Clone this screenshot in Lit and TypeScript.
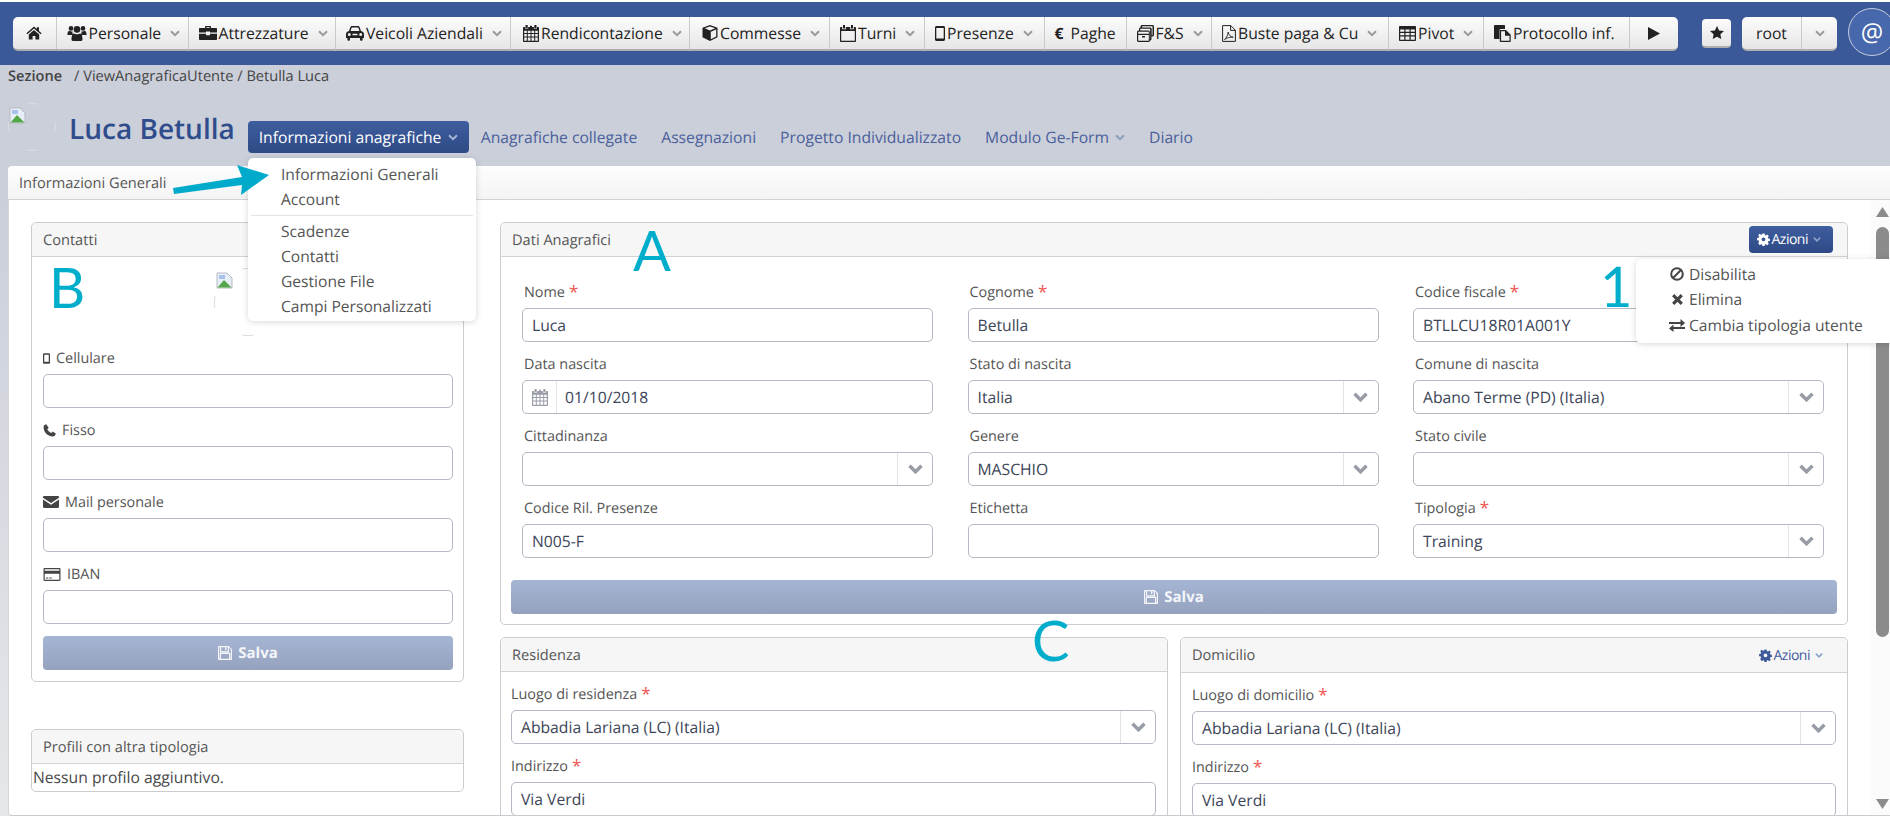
import { LitElement, html, css } from "lit";
import { customElement } from "lit/decorators.js";

const I: Record<string, () => any> = {
  home: () => html`<svg class="ic" width="16" height="14" viewBox="0 0 16 14" fill="currentColor"><path d="M8 0.6 0.4 7.2l1 1.1L8 2.6l6.6 5.7 1-1.1L13 4.9V1.2h-2.2v1.8z" /><path d="M8 4 2.8 8.4V13.6H6.6V10h2.8v3.6h3.8V8.4z" /></svg>`,
  users: () => html`<svg class="ic" width="20" height="16" viewBox="0 0 20 16" fill="currentColor"><circle cx="4" cy="3.4" r="2.3" /><circle cx="16" cy="3.4" r="2.3" /><circle cx="10" cy="4.4" r="3.3" /><path d="M0.4 10c0-3 1-4.2 2.2-4.2.8.8 2.2.9 3 .4-.3 1.200-.1 2.700.7 3.800H1.200C.6 10 .4 10.300.4 10zM19.600 10c0-3-1-4.200-2.200-4.200-.8.8-2.200.9-3 .4.300 1.200.1 2.700-.7 3.800h4.700c.6 0 1.200.3 1.200 0z" /><path d="M5.800 15.900c-.8 0-1.300-.5-1.300-1.300 0-3.600.8-6 2.400-6 1 1 5.200 1 6.200 0 1.600 0 2.400 2.400 2.400 6 0 .8-.5 1.300-1.300 1.300z" /></svg>`,
  brief: () => html`<svg class="ic" width="18" height="14" viewBox="0 0 18 14" fill="currentColor"><path d="M6 2V1c0-.6.4-1 1-1h4c.6 0 1 .4 1 1v1h5c.6 0 1 .4 1 1v3.600H11V5.500H7v1.100H0V3c0-.6.4-1 1-1zm1.300 0h3.400V1.200H7.300z" /><path d="M0 7.800h7V9.200h4V7.800h7V13c0 .6-.4 1-1 1H1c-.6 0-1-.4-1-1z" /></svg>`,
  car: () => html`<svg class="ic" width="18" height="15" viewBox="0 0 18 15" fill="currentColor"><path fill-rule="evenodd" d="M3 5 4.200 1.500C4.500.6 5.200 0 6.200 0h5.600c1 0 1.700.6 2 1.500L15 5c1.700.3 3 1.500 3 3.200V12h-1.400v1.500c0 .8-.5 1.300-1.300 1.300s-1.300-.5-1.300-1.300V12H4v1.500c0 .8-.5 1.300-1.300 1.300s-1.300-.5-1.300-1.300V12H0V8.200C0 6.500 1.300 5.300 3 5zm1.600-.1h8.800l-.9-2.800c-.1-.4-.4-.6-.8-.6H6.300c-.4 0-.7.2-.8.6zM3.300 7a1.500 1.500 0 1 0 0 3 1.500 1.500 0 0 0 0-3zm11.400 0a1.500 1.500 0 1 0 0 3 1.500 1.500 0 0 0 0-3zM6.500 7.800v1.400h5V7.800z" /></svg>`,
  cal: () => html`<svg class="ic" width="16" height="17" viewBox="0 0 16 17" fill="currentColor"><path d="M2.500 0h2.200v3H2.500zM11.300 0h2.200v3h-2.200zM7 0.800h2v2H7z" /><path fill-rule="evenodd" d="M1 2h1v1.500h3.200V2h5.600v1.500H14V2h1c.6 0 1 .4 1 1v13c0 .6-.4 1-1 1H1c-.6 0-1-.4-1-1V3c0-.6.4-1 1-1zm.2 3.800v2.300h2.600V5.800zm3.600 0v2.300h2.700V5.800zm3.700 0v2.300h2.700V5.800zm3.700 0v2.300h2.600V5.800zM1.200 9.100v2.300h2.600V9.100zm3.600 0v2.300h2.700V9.100zm3.700 0v2.300h2.700V9.100zm3.700 0v2.300h2.600V9.100zM1.200 12.400v3.300h2.600v-3.300zm3.600 0v3.300h2.700v-3.300zm3.700 0v3.300h2.700v-3.300zm3.700 0v3.300h2.600v-3.300z" /></svg>`,
  cube: () => html`<svg class="ic" width="16" height="16" viewBox="0 0 16 16" fill="currentColor"><path fill-rule="evenodd" d="M8 0l7.500 2.800v9.400L8 16 .5 12.200V2.800zM2.800 3.300 8 5.400l5.200-2.100L8 1.400zM8.800 6.700v7.500l5.400-2.800V4.500z" /></svg>`,
  calo: () => html`<svg class="ic" width="16" height="17" viewBox="0 0 16 17" fill="currentColor"><path d="M3 0h2v3.500H3zM11 0h2v3.500h-2z" /><path fill-rule="evenodd" d="M1 2h1.200v2.200h3.600V2h4.400v2.200h3.600V2H15c.6 0 1 .4 1 1v13c0 .6-.4 1-1 1H1c-.6 0-1-.4-1-1V3c0-.6.4-1 1-1zm.2 4v9.800h13.600V6z" /></svg>`,
  mobile: () => html`<svg class="ic" width="10" height="15" viewBox="0 0 10 15" fill="currentColor"><path fill-rule="evenodd" d="M1.500 0h7C9.300 0 10 .7 10 1.500v12c0 .8-.7 1.500-1.500 1.500h-7C.7 15 0 14.300 0 13.500v-12C0 .7.700 0 1.500 0zM1.300 2v10.500h7.400V2z" /></svg>`,
  mobileS: () => html`<svg class="ic" width="7" height="11" viewBox="0 0 10 15" fill="currentColor"><path fill-rule="evenodd" d="M1.500 0h7C9.300 0 10 .7 10 1.500v12c0 .8-.7 1.500-1.500 1.500h-7C.7 15 0 14.300 0 13.500v-12C0 .7.700 0 1.500 0zM1.800 2.200v10h6.400v-10z" /></svg>`,
  box: () => html`<svg class="ic" width="17" height="17" viewBox="0 0 17 17" fill="currentColor"><path fill-rule="evenodd" d="M5 0h10.500c.8 0 1.500.7 1.500 1.500V10c0 .8-.7 1.500-1.500 1.500h-1V14c0 .8-.7 1.500-1.500 1.500v0c0 .8-.7 1.500-1.500 1.500H1.500C.7 17 0 16.300 0 15.500V7c0-.8.7-1.500 1.500-1.500H2V4c0-.8.7-1.500 1.500-1.500V1.500C3.500.7 4.200 0 5 0zm.2 1.200v1.300h8c.8 0 1.500.7 1.500 1.500v6.200h.8V1.200zM3.300 3.800v1.700h8c.8 0 1.500.7 1.500 1.500v7h.3V3.800zM1.200 6.800v2h10.600v-2zm0 3.200v5.800h10.600V10zm3.800 1h3v1.500H5z" /></svg>`,
  pdf: () => html`<svg class="ic" width="14" height="17" viewBox="0 0 14 17" fill="none" stroke="currentColor"><path d="M.6.6h8.200l4.600 4.600v11.200H.6z" /><path d="M8.600.6v4.800h4.800" /><path stroke-width=".9" d="M2.500 14.500c1.500-.8 3.200-4 3.700-7.500.3 3 2.500 5 5 5.200-3-.3-6.300.5-8.700 2.300z" /></svg>`,
  table: () => html`<svg class="ic" width="17" height="15" viewBox="0 0 17 15" fill="currentColor"><path fill-rule="evenodd" d="M.8 0h15.400c.4 0 .8.400.8.800v13.400c0 .4-.4.800-.8.800H.8c-.4 0-.8-.4-.8-.8V.8C0 .4.400 0 .8 0zm.4 3.500v2.300h4.100V3.500zm5.300 0v2.300h4V3.500zm5.200 0v2.300h4.100V3.500zM1.200 7v2.300h4.100V7zm5.300 0v2.300h4V7zm5.200 0v2.300h4.100V7zM1.200 10.500v3.200h4.100v-3.200zm5.300 0v3.200h4v-3.200zm5.200 0v3.200h4.100v-3.200z" /></svg>`,
  paste: () => html`<svg class="ic" width="17" height="17" viewBox="0 0 17 17" fill="currentColor"><path d="M1 0h9c.6 0 1 .4 1 1v3H7C6 4 5.500 4.600 5.500 5.500V14H1c-.6 0-1-.4-1-1V1c0-.6.4-1 1-1z" /><path fill-rule="evenodd" d="M6.800 5H12l4.700 4.700V16c0 .6-.4 1-1 1H6.800c-.6 0-1-.4-1-1V6c0-.6.4-1 1-1zm.3 1.200v9.600h8.400v-5H11V6.200z" /></svg>`,
  play: () => html`<svg class="ic" width="12" height="13" viewBox="0 0 12 13" fill="currentColor"><path d="M0 0 12 6.500 0 13z" /></svg>`,
  star: () => html`<svg class="ic" width="14" height="13" viewBox="0 0 14 13" fill="currentColor"><path d="M7 0l2.100 4.400 4.900.6-3.600 3.300.9 4.700L7 10.700 2.700 13l.9-4.700L0 5l4.900-.6z" /></svg>`,
  gear: () => html`<svg class="ic" width="13" height="13" viewBox="-.5 -.5 15 15" fill="currentColor"><path fill-rule="evenodd" d="M5.800 0h2.400l.4 1.900 1.200.5 1.600-1.100 1.700 1.700-1.100 1.600.5 1.200 1.900.4v2.400l-1.900.4-.5 1.200 1.100 1.600-1.700 1.700-1.600-1.100-1.200.5-.4 1.900H5.800l-.4-1.900-1.200-.5-1.600 1.100L.9 11l1.100-1.600-.5-1.200L-.4 7.800V5.400l1.900-.4.5-1.200L.9 2.200l1.700-1.700 1.600 1.100 1.200-.5zM7 4.600a2.200 2.200 0 1 0 0 4.400 2.200 2.200 0 0 0 0-4.400z" /></svg>`,
  ban: () => html`<svg class="ic" width="14" height="14" viewBox="0 0 14 14" fill="none" stroke="currentColor" stroke-width="2"><circle cx="7" cy="7" r="5.800" /><path d="M3 11 11 3" /></svg>`,
  times: () => html`<svg class="ic" width="11" height="11" viewBox="0 0 11 11" fill="none" stroke="currentColor" stroke-width="3.200"><path d="M1.200 1.200l8.600 8.600M9.800 1.200l-8.600 8.600" /></svg>`,
  swap: () => html`<svg class="ic" width="16" height="13" viewBox="0 0 16 13" fill="currentColor"><path d="M0 3h11.500V0L16 4l-4.500 4V5H0zM16 8H4.500V5.600L0 9.500l4.500 3.500v-3H16z" /></svg>`,
  phone: () => html`<svg class="ic" width="13" height="13" viewBox="0 0 13 13" fill="currentColor"><path d="M3.200.2 1 1.300C-.2 4.500 1.500 8 3.300 9.800c1.900 1.800 5.200 3.500 8.400 2.300l1.200-2.300-3-2.300-1.600 1.400C6.500 8.400 4.700 6.600 4.300 5.300l1.400-1.600z" /></svg>`,
  mail: () => html`<svg class="ic" width="16" height="12" viewBox="0 0 16 12" fill="currentColor"><path d="M1.200 0h13.600c.7 0 1.200.5 1.200 1.200v.6L8 7 0 1.800v-.6C0 .5.500 0 1.200 0z" /><path d="M0 3.500 8 8.700l8-5.200v7.300c0 .7-.5 1.200-1.200 1.200H1.200C.5 12 0 11.500 0 10.800z" /></svg>`,
  card: () => html`<svg class="ic" width="18" height="13" viewBox="0 0 17 13" fill="currentColor"><path fill-rule="evenodd" d="M1.200 0h14.600c.7 0 1.200.5 1.200 1.200v10.600c0 .7-.5 1.200-1.200 1.200H1.200C.5 13 0 12.500 0 11.800V1.200C0 .5.500 0 1.200 0zM1.200 1.300v1.500h14.600V1.300zm0 4.400v6h14.600v-6zm1.200 3.900h2.400v1H2.400zm3.400 0h2.400v1H5.800z" /></svg>`,
  save: () => html`<svg class="ic" width="14" height="14" viewBox="0 0 14 14" fill="currentColor"><path fill-rule="evenodd" d="M1 0h9.800L14 3.200V13c0 .6-.4 1-1 1H1c-.6 0-1-.4-1-1V1c0-.6.4-1 1-1zm2.200 1.200v4h6.600v-4H8.400v3H7v-3zM3 8v4.800h8V8zM1.200 1.200v11.600h.6V7.300c0-.3.2-.5.5-.5h9.400c.3 0 .5.2.5.5v5.500h.6V3.700L11 1.300v4.400c0 .4-.2.7-.6.7H2.600c-.3 0-.6-.3-.6-.7V1.200z" /></svg>`,
};

const chev = () => html`<svg class="chev" width="10" height="7" viewBox="0 0 10 7" fill="none" stroke="currentColor" stroke-width="2"><path d="M1 1.200 5 5.200l4-4" /></svg>`;
const chevBig = () => html`<svg class="ic" width="15" height="10" viewBox="0 0 15 10" fill="none" stroke="currentColor" stroke-width="3.400"><path d="M1.500 1.800 7.500 7.800l6-6" /></svg>`;

// browser's broken-image glyph
const broken = () => html`<svg class="broken" width="17" height="17" viewBox="0 0 17 17"><path d="M1 1h10l5 5v10H1z" fill="#e8eef8" stroke="#b5b9c2" /><path d="M1.500 15.500 8 8l7.500 7.500z" fill="#55a84a" /><path d="M3 3h6v4H3z" fill="#a9c3ee" /></svg>`;

// only short arcs of the avatar's circle show up around the broken picture
const ring = (d: number) => {
  const r = d / 2 - 0.5;
  const c = 2 * Math.PI * r;
  return html`<svg class="ring" width=${d} height=${d} fill="none"><circle cx=${d / 2} cy=${d / 2} r=${r} stroke="#d9dbe0" stroke-dasharray="${12} ${c / 4 - 12}" stroke-dashoffset="6" /></svg>`;
};

const TOOLBAR = [
  { icon: "home" },
  { icon: "users", label: "Personale", more: true },
  { icon: "brief", label: "Attrezzature", more: true },
  { icon: "car", label: "Veicoli Aziendali", more: true },
  { icon: "cal", label: "Rendicontazione", more: true, wide: true },
  { icon: "cube", label: "Commesse", more: true, wide: true },
  { icon: "calo", label: "Turni", more: true },
  { icon: "mobile", label: "Presenze", more: true },
  { euro: true, label: "Paghe" },
  { icon: "box", label: "F&S", more: true },
  { icon: "pdf", label: "Buste paga & Cu", more: true },
  { icon: "table", label: "Pivot", more: true },
  { icon: "paste", label: "Protocollo inf." },
  { icon: "play" },
];

type Field = { label: string; req?: boolean; value?: string; kind?: "input" | "select" | "date" };

const DATI: Field[] = [
  { label: "Nome", req: true, value: "Luca" },
  { label: "Cognome", req: true, value: "Betulla" },
  { label: "Codice fiscale", req: true, value: "BTLLCU18R01A001Y" },
  { label: "Data nascita", value: "01/10/2018", kind: "date" },
  { label: "Stato di nascita", value: "Italia", kind: "select" },
  { label: "Comune di nascita", value: "Abano Terme (PD) (Italia)", kind: "select" },
  { label: "Cittadinanza", kind: "select" },
  { label: "Genere", value: "MASCHIO", kind: "select" },
  { label: "Stato civile", kind: "select" },
  { label: "Codice Ril. Presenze", value: "N005-F" },
  { label: "Etichetta" },
  { label: "Tipologia", req: true, value: "Training", kind: "select" },
];

@customElement("app-root")
export class AppRoot extends LitElement {
  static styles = css`
    :host {
      display: block;
      position: relative;
      width: 1890px;
      height: 816px;
      overflow: hidden;
      background: linear-gradient(#cbcfd9 200px, #e6e7ea 816px);
      font-family: "Open Sans", sans-serif;
      font-size: 14.4px;
      color: #555;
      text-rendering: geometricPrecision;
    }
    svg {
      display: block;
      flex: none;
    }

    /* top bar */
    .nav {
      display: flex;
      align-items: flex-start;
      height: 48px;
      padding: 15px 0 0 13px;
      border-top: 2px solid #fff;
      background: #3b5998;
    }
    .nav > * {
      flex: none;
    }
    .toolbar {
      display: grid;
      grid-template-columns: 43.5px 132px 147.5px 175px 179px 140px 95px 119.5px 82px 85.5px 177px 95px 145.5px 48.5px;
      height: 34px;
    }
    .tool,
    .btn {
      display: flex;
      align-items: center;
      box-sizing: border-box;
      height: 34px;
      background: linear-gradient(#fcfcfc, #e6e6e6);
      border-bottom: 2px solid #aeaeae;
      color: #222;
      font-size: 15.7px;
    }
    .tool {
      gap: 2px;
      padding: 0 0 0 10px;
      border-right: 1px solid #c9c9c9;
      white-space: nowrap;
    }
    .tool.wide {
      padding-left: 12px;
    }
    .tool:first-child {
      justify-content: center;
      padding: 0;
      border-radius: 5px 0 0 5px;
    }
    .tool:last-child {
      justify-content: center;
      padding: 0;
      border-right: 0;
      border-radius: 0 5px 5px 0;
    }
    .tool .chev,
    .btn .chev {
      margin-left: 7px;
      color: #999;
    }
    .euro {
      font-weight: 700;
      width: 14px;
    }
    .star {
      justify-content: center;
      width: 29px;
      height: 29px;
      margin: 2px 0 0 24px;
      border-radius: 4px;
    }
    .user {
      display: flex;
      margin-left: 11px;
    }
    .user .name {
      justify-content: center;
      width: 60px;
      border-right: 1px solid #c9c9c9;
      border-radius: 5px 0 0 5px;
    }
    .user .caret {
      justify-content: center;
      width: 35px;
      border-radius: 0 5px 5px 0;
    }
    .user .caret .chev {
      margin: 0;
    }
    .at {
      box-sizing: border-box;
      display: flex;
      align-items: center;
      justify-content: center;
      width: 48px;
      height: 48px;
      margin: -9px 0 0 11px;
      border-radius: 50%;
      border: 1px solid #c4cde0;
      background: #4768ad;
      color: #fff;
      font-size: 25px;
    }

    .crumb {
      display: flex;
      align-items: center;
      gap: 12px;
      height: 22px;
      padding-left: 8px;
      color: #444;
      font-size: 14.6px;
    }
    .crumb b {
      font-weight: 600;
    }

    /* page header */
    .head {
      display: flex;
      align-items: flex-start;
      height: 79px;
      padding-left: 8px;
    }
    .avatar {
      position: relative;
      flex: none;
      width: 48px;
      height: 50px;
      margin-top: 16px;
    }
    .avatar .broken {
      position: absolute;
      left: 1px;
      top: 4px;
    }
    h1 {
      margin: 24px 13px 0 13px;
      font-size: 28px;
      line-height: 36px;
      font-weight: 600;
      color: #2f4c8c;
      white-space: nowrap;
    }
    .pill {
      display: flex;
      align-items: center;
      gap: 7px;
      box-sizing: border-box;
      width: 221px;
      height: 32px;
      margin-top: 34px;
      padding-left: 11px;
      border-radius: 4px;
      background: linear-gradient(#3f5e9f, #2e4a86);
      color: #fff;
      font-size: 15.7px;
    }
    .pill .chev {
      color: #a5b4d3;
    }
    .links {
      display: flex;
      align-items: center;
      gap: 24px;
      height: 32px;
      margin: 34px 0 0 12px;
      color: #4a5f9c;
      font-size: 15.7px;
    }
    .links span {
      display: flex;
      align-items: center;
      gap: 6px;
    }
    .links .chev {
      color: #8d9cc0;
    }

    /* tab strip and panel */
    .tabs {
      box-sizing: border-box;
      height: 34px;
      margin-left: 8px;
      padding: 7px 0 0 11px;
      background: linear-gradient(#fdfdfd, #f4f4f4);
      border-bottom: 1px solid #d2d2d2;
      border-radius: 4px 0 0 0;
      font-size: 14.6px;
    }
    .panel {
      display: flex;
      height: 616px;
      box-sizing: border-box;
      margin-left: 8px;
      border-left: 1px solid #d4d6da;
      border-bottom: 1px solid #c9cbd0;
      border-radius: 0 0 0 4px;
      background: #fff;
    }
    .main {
      flex: 1;
      min-width: 0;
      overflow: hidden;
      display: grid;
      grid-template-columns: 433px 1348px;
      gap: 36px;
      align-items: start;
      padding: 22px 0 0 22px;
    }
    .col {
      display: flex;
      flex-direction: column;
    }
    .scroll {
      flex: none;
      box-sizing: border-box;
      width: 20px;
      display: flex;
      flex-direction: column;
      padding: 7px 1px 6px 6px;
      background: #fbfbfb;
      color: #8b8b8b;
    }
    .thumb {
      height: 410px;
      margin: 10px 0 auto;
      border-radius: 7px;
      background: #8b8b8b;
    }

    .card {
      box-sizing: border-box;
      border: 1px solid #cbccd1;
      border-radius: 5px;
      background: #fff;
    }
    .card-h {
      display: flex;
      align-items: center;
      justify-content: space-between;
      box-sizing: border-box;
      height: 34px;
      padding: 0 11px;
      background: #f6f6f6;
      border-bottom: 1px solid #d3d3d3;
      border-radius: 5px 5px 0 0;
      color: #555;
      font-size: 14.6px;
    }
    .card-h.tall {
      height: 35px;
    }
    .contact-body {
      padding: 0 10px 11px 11px;
    }
    .photo {
      position: relative;
      height: 91px;
    }
    .photo .ring {
      position: absolute;
      left: 171px;
      top: 11px;
    }
    .photo .broken {
      position: absolute;
      left: 173px;
      top: 15px;
    }
    .field {
      padding-bottom: 12px;
    }
    .lab {
      display: flex;
      align-items: center;
      gap: 6px;
      height: 20px;
      margin-bottom: 6px;
      white-space: nowrap;
    }
    .lab .req {
      margin-left: -2px;
      color: #f0534f;
      font-size: 17px;
      line-height: 20px;
    }
    .lab svg {
      color: #444;
    }
    .ctl {
      display: flex;
      align-items: center;
      box-sizing: border-box;
      height: 34px;
      border: 1px solid #b5b7c3;
      border-radius: 5px;
      background: #fff;
      color: #3c4558;
      font-size: 15.7px;
    }
    .ctl .val {
      flex: 1;
      min-width: 0;
      padding-left: 9px;
      white-space: nowrap;
    }
    .ctl .arrow {
      display: flex;
      align-items: center;
      justify-content: center;
      flex: none;
      box-sizing: border-box;
      width: 35px;
      height: 32px;
      border-left: 1px solid #e3e3e3;
      color: #989ca6;
    }
    .ctl .addon {
      display: flex;
      align-items: center;
      justify-content: center;
      flex: none;
      box-sizing: border-box;
      width: 34px;
      height: 32px;
      border-right: 1px solid #e3e3e3;
      color: #9a9ea8;
    }
    .ctl .addon + .val {
      padding-left: 8px;
    }
    .save {
      display: flex;
      align-items: center;
      justify-content: center;
      gap: 6px;
      height: 34px;
      border-radius: 4px;
      background: linear-gradient(#a5b5d4, #95a2be);
      color: #f4f6fa;
      font-size: 15px;
      font-weight: 700;
    }
    .profili {
      margin-top: 47px;
    }
    .empty {
      padding: 3px 0 4px 1px;
      font-size: 15.7px;
      line-height: 20px;
      color: #484848;
    }
    .dati-body {
      padding: 25px 10px 10px;
    }
    .dati-grid {
      display: grid;
      grid-template-columns: repeat(3, 1fr);
      column-gap: 34.5px;
      padding: 0 13px 0 11px;
    }
    .dati-grid .lab {
      padding-left: 2px;
    }
    .dati-grid .field:nth-last-child(-n + 3) {
      padding-bottom: 22px;
    }
    .pair {
      display: grid;
      grid-template-columns: 668px 668px;
      gap: 12px;
      margin-top: 12px;
    }
    .pair-body {
      padding: 12px 11px 0 10px;
    }
    .pair-body.right {
      padding-left: 11px;
    }
    .azioni {
      display: flex;
      align-items: center;
      gap: 2px;
      box-sizing: border-box;
      width: 84px;
      height: 27px;
      padding-left: 7.5px;
      margin-right: 3px;
      border-radius: 4px;
      background: linear-gradient(#3f5e9f, #2e4a86);
      color: #fff;
      font-size: 14px;
      letter-spacing: -0.5px;
    }
    .azioni .chev {
      width: 8px;
      margin-left: 3px;
      color: #8ea2cb;
    }
    .azioni.flat {
      width: auto;
      padding: 0;
      margin-right: 13px;
      background: none;
      color: #3f5a9b;
    }

    /* things lying over the page */
    .menu {
      position: absolute;
      box-sizing: border-box;
      background: #fff;
      border-radius: 5px;
      box-shadow: 0 1px 6px rgba(0, 0, 0, 0.16);
      color: #555;
      font-size: 15.6px;
      line-height: 25px;
    }
    .menu-info {
      left: 248px;
      top: 158px;
      width: 228px;
      height: 163px;
      padding: 3.5px 3px;
    }
    .menu-info div {
      padding-left: 30px;
    }
    .menu-info hr {
      height: 1px;
      margin: 3px 0 3px;
      border: 0;
      background: #e4e4e4;
    }
    .menu-act {
      left: 1636px;
      top: 259px;
      width: 260px;
      height: 84px;
      padding-top: 2.5px;
      border-radius: 5px 0 0 5px;
    }
    .menu-act div {
      display: flex;
      align-items: center;
      height: 25.5px;
      padding-left: 33px;
    }
    .menu-act span {
      display: flex;
      justify-content: center;
      width: 16px;
      margin-right: 4px;
      color: #444;
    }
    .mark {
      position: absolute;
      font-family: Lato, "Open Sans", sans-serif;
      font-size: 56px;
      line-height: 1;
      color: #00aecb;
    }
    .mark.b {
      left: 49px;
      top: 259px;
    }
    .mark.a {
      left: 633px;
      top: 222px;
    }
    .mark.c {
      left: 1032px;
      top: 612px;
    }
    .mark.one {
      left: 1600px;
      top: 258px;
    }
    .arrow-mark {
      position: absolute;
      left: 170px;
      top: 162px;
    }
  `;

  private tool(t: any) {
    return html`<div class="tool ${t.wide ? "wide" : ""}">
      ${t.euro ? html`<span class="euro">€</span>` : ""}${t.icon ? I[t.icon]() : ""}
      ${t.label ? html`<span>${t.label}</span>` : ""}${t.more ? chev() : ""}
    </div>`;
  }

  private field(f: Field) {
    return html`<div class="field">
      <div class="lab">${f.label}${f.req ? html`<span class="req">*</span>` : ""}</div>
      <div class="ctl">
        ${f.kind === "date" ? html`<span class="addon">${I.cal()}</span>` : ""}
        <span class="val">${f.value ?? ""}</span>
        ${f.kind === "select" ? html`<span class="arrow">${chevBig()}</span>` : ""}
      </div>
    </div>`;
  }

  private contact(icon: string, label: string) {
    return html`<div class="field">
      <div class="lab">${I[icon]()}<span>${label}</span></div>
      <div class="ctl"></div>
    </div>`;
  }

  render() {
    return html`
      <div class="nav">
        <div class="toolbar">${TOOLBAR.map((t) => this.tool(t))}</div>
        <div class="btn star">${I.star()}</div>
        <div class="user">
          <div class="btn name">root</div>
          <div class="btn caret">${chev()}</div>
        </div>
        <div class="at">@</div>
      </div>

      <div class="crumb"><b>Sezione</b><span>/ ViewAnagraficaUtente / Betulla Luca</span></div>

      <div class="head">
        <div class="avatar">${ring(48)}${broken()}</div>
        <h1>Luca Betulla</h1>
        <div class="pill">Informazioni anagrafiche ${chev()}</div>
        <div class="links">
          <span>Anagrafiche collegate</span>
          <span>Assegnazioni</span>
          <span>Progetto Individualizzato</span>
          <span>Modulo Ge-Form ${chev()}</span>
          <span>Diario</span>
        </div>
      </div>

      <div class="tabs">Informazioni Generali</div>
      <div class="panel">
        <div class="main">
          <div class="col">
            <div class="card">
              <div class="card-h">Contatti</div>
              <div class="contact-body">
                <div class="photo">${ring(68)}${broken()}</div>
                ${this.contact("mobileS", "Cellulare")}
                ${this.contact("phone", "Fisso")}
                ${this.contact("mail", "Mail personale")}
                ${this.contact("card", "IBAN")}
                <div class="save">${I.save()} Salva</div>
              </div>
            </div>
            <div class="card profili">
              <div class="card-h">Profili con altra tipologia</div>
              <div class="empty">Nessun profilo aggiuntivo.</div>
            </div>
          </div>

          <div class="col">
            <div class="card">
              <div class="card-h">Dati Anagrafici<div class="azioni">${I.gear()} Azioni ${chev()}</div></div>
              <div class="dati-body">
                <div class="dati-grid">${DATI.map((f) => this.field(f))}</div>
                <div class="save">${I.save()} Salva</div>
              </div>
            </div>
            <div class="pair">
              <div class="card">
                <div class="card-h">Residenza</div>
                <div class="pair-body">
                  ${this.field({ label: "Luogo di residenza", req: true, value: "Abbadia Lariana (LC) (Italia)", kind: "select" })}
                  ${this.field({ label: "Indirizzo", req: true, value: "Via Verdi" })}
                </div>
              </div>
              <div class="card">
                <div class="card-h tall">Domicilio<div class="azioni flat">${I.gear()} Azioni ${chev()}</div></div>
                <div class="pair-body right">
                  ${this.field({ label: "Luogo di domicilio", req: true, value: "Abbadia Lariana (LC) (Italia)", kind: "select" })}
                  ${this.field({ label: "Indirizzo", req: true, value: "Via Verdi" })}
                </div>
              </div>
            </div>
          </div>
        </div>
        <div class="scroll">
          <svg width="13" height="10" viewBox="0 0 13 10" fill="currentColor"><path d="M6.500 0 13 10H0z" /></svg>
          <div class="thumb"></div>
          <svg width="13" height="10" viewBox="0 0 13 10" fill="currentColor"><path d="M6.500 10 13 0H0z" /></svg>
        </div>
      </div>

      <div class="menu menu-info">
        <div>Informazioni Generali</div>
        <div>Account</div>
        <hr />
        <div>Scadenze</div>
        <div>Contatti</div>
        <div>Gestione File</div>
        <div>Campi Personalizzati</div>
      </div>
      <div class="menu menu-act">
        <div><span>${I.ban()}</span>Disabilita</div>
        <div><span>${I.times()}</span>Elimina</div>
        <div><span>${I.swap()}</span>Cambia tipologia utente</div>
      </div>

      <svg class="arrow-mark" width="104" height="36" viewBox="0 0 104 36" fill="#00aacb"><path d="M3 26 72 15 67 3 99 13 71 33 72 23 4 32z" /></svg>
      <span class="mark b">B</span>
      <span class="mark a">A</span>
      <span class="mark c">C</span>
      <span class="mark one">1</span>
    `;
  }
}
